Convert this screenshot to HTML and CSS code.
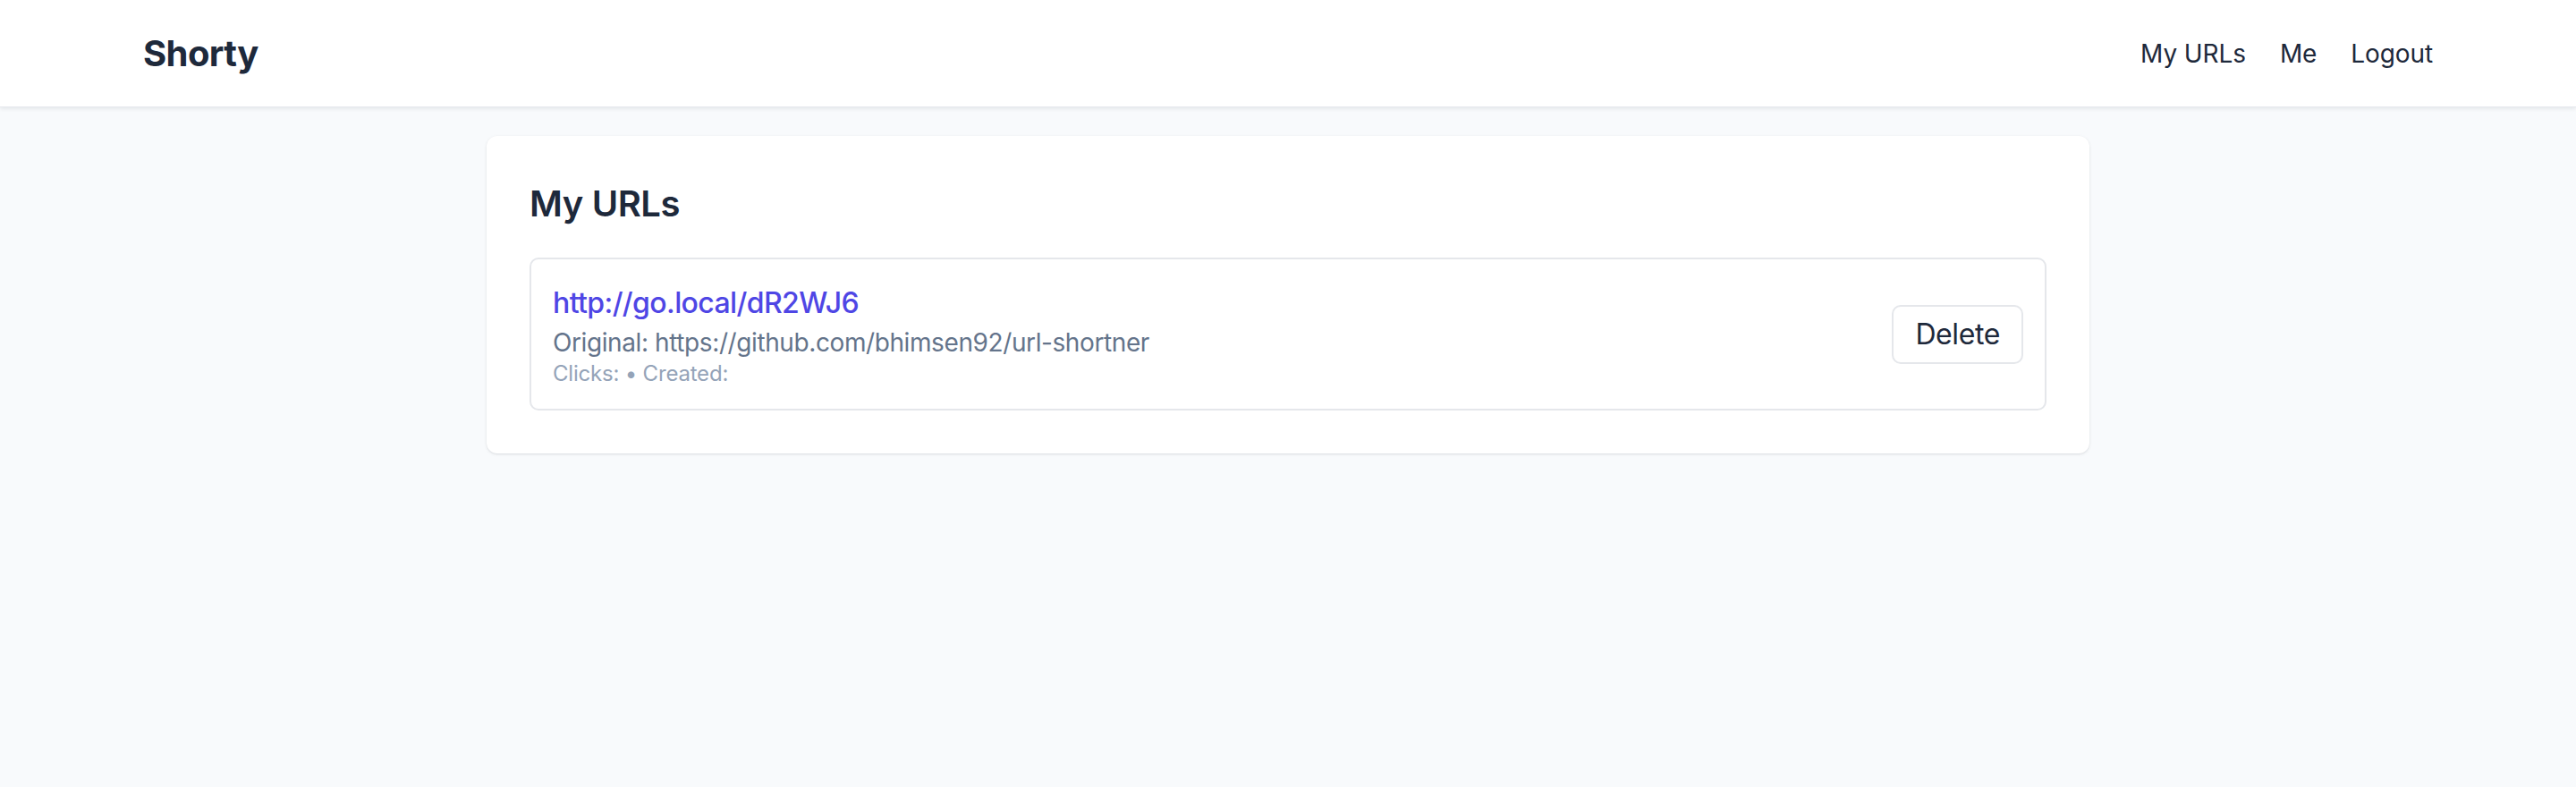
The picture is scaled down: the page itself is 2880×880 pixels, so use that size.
FILE: index.html
```html
<!DOCTYPE html>
<html lang="en">
<head>
<meta charset="utf-8">
<title>Shorty</title>
<link rel="stylesheet" href="styles.css">
</head>
<body>
<header class="topbar">
  <div class="topbar-inner">
    <a class="brand" href="#">Shorty</a>
    <nav class="nav">
      <a href="#">My URLs</a>
      <a href="#">Me</a>
      <a href="#">Logout</a>
    </nav>
  </div>
</header>
<main class="main">
  <section class="card">
    <h1 class="card-title">My URLs</h1>
    <ul class="url-list">
      <li class="url-item">
        <div class="url-info">
          <a class="short-link" href="#">http://go.local/dR2WJ6</a>
          <div class="original">Original: https://github.com/bhimsen92/url-shortner</div>
          <div class="meta">Clicks: • Created:</div>
        </div>
        <button class="btn-delete" type="button">Delete</button>
      </li>
    </ul>
  </section>
</main>
</body>
</html>
```
FILE: styles.css
```css
* { box-sizing: border-box; }
html, body { margin: 0; padding: 0; }
body {
  background: #f8fafc;
  font-family: Inter, "Noto Sans", "Liberation Sans", sans-serif;
  color: #1e293b;
  min-height: 880px;
}
a { text-decoration: none; color: inherit; }

.topbar {
  background: #ffffff;
  box-shadow: 0 2px 4px rgba(15, 23, 42, 0.08);
  border-bottom: 1px solid #e7e9ee;
}
.topbar-inner {
  max-width: 2560px;
  margin: 0 auto;
  height: 119px;
  display: flex;
  align-items: center;
  justify-content: space-between;
}
.brand {
  font-size: 40px;
  line-height: 56px;
  font-weight: 700;
  color: #1e293b;
  letter-spacing: -0.6px;
}
.nav {
  display: flex;
  gap: 38px;
  font-size: 28px;
  line-height: 40px;
  color: #1e293b;
  letter-spacing: -0.1px;
}

.main {
  padding-top: 32px;
}
.card {
  width: 1792px;
  margin: 0 auto;
  background: #ffffff;
  border-radius: 12px;
  box-shadow: 0 1px 2px rgba(15, 23, 42, 0.08), 0 1px 4px rgba(15, 23, 42, 0.06);
  padding: 48px;
}
.card-title {
  margin: 0 0 32px;
  font-size: 40px;
  line-height: 56px;
  font-weight: 600;
  color: #1e293b;
  letter-spacing: -0.4px;
}
.url-list {
  list-style: none;
  margin: 0;
  padding: 0;
}
.url-item {
  display: flex;
  align-items: center;
  justify-content: space-between;
  border: 2px solid #e5e7eb;
  border-radius: 10px;
  padding: 25px 24px 24px;
}
.url-info {
  display: flex;
  flex-direction: column;
}
.short-link {
  font-size: 32px;
  line-height: 48px;
  font-weight: 500;
  color: #4f46e5;
  letter-spacing: -0.6px;
}
.original {
  font-size: 28px;
  line-height: 40px;
  color: #64748b;
  letter-spacing: -0.4px;
}
.meta {
  font-size: 24px;
  line-height: 30px;
  color: #94a3b8;
  letter-spacing: -0.2px;
}
.btn-delete {
  font-family: inherit;
  font-size: 32px;
  line-height: 48px;
  color: #1e293b;
  background: #ffffff;
  border: 2px solid #e5e7eb;
  border-radius: 10px;
  padding: 7px 24px;
  letter-spacing: -0.4px;
  cursor: pointer;
}
```
